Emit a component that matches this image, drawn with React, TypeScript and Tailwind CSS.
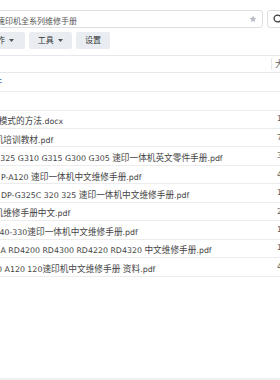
import React from "react";

const CJK = /([\u3000-\u9fff\uff00-\uffef]+)/;

// CJK glyphs in the shot are wider than the latin face, so size runs apart
function Txt({ text }: { text: string }) {
  return (
    <>
      {text.split(CJK).filter(Boolean).map((part, i) =>
        CJK.test(part) ? (
          <span key={i} className="text-[8.66px]">{part}</span>
        ) : (
          <span key={i} className="text-[7.87px] whitespace-pre">{part}</span>
        )
      )}
    </>
  );
}

const files = [
  { name: "模式的方法.docx", size: "1", ml: "-ml-[1.3px]" },
  { name: "机培训教材.pdf", size: "7", ml: "-ml-[5.3px]" },
  { name: "325 G310 G315 G300 G305 速印一体机英文零件手册.pdf", size: "3", ml: "ml-[0.3px]" },
  { name: "P-A120 速印一体机中文维修手册.pdf", size: "4", ml: "ml-[1px]" },
  { name: "DP-G325C 320 325 速印一体机中文维修手册.pdf", size: "1", ml: "ml-[1px]" },
  { name: "机维修手册中文.pdf", size: "2", ml: "-ml-[5.5px]" },
  { name: "40-330速印一体机中文维修手册.pdf", size: "1", ml: "-ml-[0.5px]" },
  { name: "A RD4200 RD4300 RD4220 RD4320 中文维修手册.pdf", size: "1", ml: "ml-[0.5px]" },
  { name: "0 A120 120速印机中文维修手册 资料.pdf", size: "4", ml: "-ml-[3px]" },
];

function Caret() {
  return (
    <svg width="5" height="3" viewBox="0 0 5 3" className="ml-[4px]">
      <path d="M0 0h5L2.5 3z" fill="#555" />
    </svg>
  );
}

export default function App() {
  return (
    <div className="relative flex h-[380px] w-[280px] flex-col overflow-hidden bg-white font-['DejaVu_Sans','Noto_Sans_CJK_SC',sans-serif] leading-none text-[#444]">
      {/* search bar */}
      <div className="mt-[10px] flex h-[18px] shrink-0 items-stretch">
        <div className="-ml-[10px] flex w-[273px] shrink-0 items-center justify-between rounded-[3px] border border-[#dcdfe4] pr-[5px]">
          <span className="ml-[6px] text-[#555]">
            <span className="text-[8px]">速印机全系列维修手册</span>
          </span>
          <svg width="8" height="8" viewBox="0 0 24 24">
            <path
              d="M12 2l3.1 6.3 6.9 1-5 4.9 1.2 6.8L12 17.8 5.8 21l1.2-6.8-5-4.9 6.9-1z"
              fill="#b9bdc5"
            />
          </svg>
        </div>
        <div className="ml-[4px] flex w-[22px] shrink-0 items-center rounded-[3px] border border-[#dcdfe4] pl-[5px]">
          <svg width="10" height="10" viewBox="0 0 10 10">
            <circle cx="4.5" cy="4.5" r="3.4" fill="none" stroke="#3a3a3a" strokeWidth="1.3" />
            <path d="M7 7l2.6 2.6" stroke="#3a3a3a" strokeWidth="1.3" />
          </svg>
        </div>
      </div>

      {/* toolbar */}
      <div className="mt-[4px] flex h-[17px] shrink-0 gap-[4.3px] text-[#333]">
        <div className="-ml-[19.7px] flex w-[44.4px] shrink-0 items-center rounded-[2px] bg-[#e9edf2] pl-[8.7px]">
          <span className="text-[8px]">操作</span>
          <Caret />
        </div>
        <div className="flex w-[42.7px] shrink-0 items-center rounded-[2px] bg-[#e9edf2] pl-[8.7px]">
          <span className="text-[8px]">工具</span>
          <Caret />
        </div>
        <div className="flex w-[34px] shrink-0 items-center rounded-[2px] bg-[#e9edf2] pl-[9px]">
          <span className="text-[8px]">设置</span>
        </div>
      </div>

      {/* file table */}
      <div className="mt-[6px] flex-1">
        <div className="flex h-[18.4px] border-y border-[#e6e8eb]">
          <div className="w-[270.5px] shrink-0" />
          <div className="my-[2px] flex items-center border-l border-[#e6e8eb] pl-[3.5px] text-[#666]">
            <span className="text-[8.66px] whitespace-nowrap">大小</span>
          </div>
        </div>
        <div className="flex h-[18.8px] items-center border-b border-[#ececec]">
          <span className="-ml-[6.5px] text-[8.66px] text-[#3f6fb5]">件</span>
        </div>
        <div className="h-[18.4px] border-b border-[#ececec]" />
        {files.map((f, i) => (
          <div key={i} className="flex h-[18.45px] items-center border-b border-[#ececec]">
            <div className="flex w-[270.5px] shrink-0 items-center overflow-hidden whitespace-nowrap">
              <span className={`${f.ml} whitespace-nowrap`}>
                <Txt text={f.name} />
              </span>
            </div>
            <span className="pl-[6.5px] text-[7.87px] text-[#555]">{f.size}</span>
          </div>
        ))}
      </div>

      <div className="h-[2px] shrink-0 bg-[#f1f1f1]" />
    </div>
  );
}
